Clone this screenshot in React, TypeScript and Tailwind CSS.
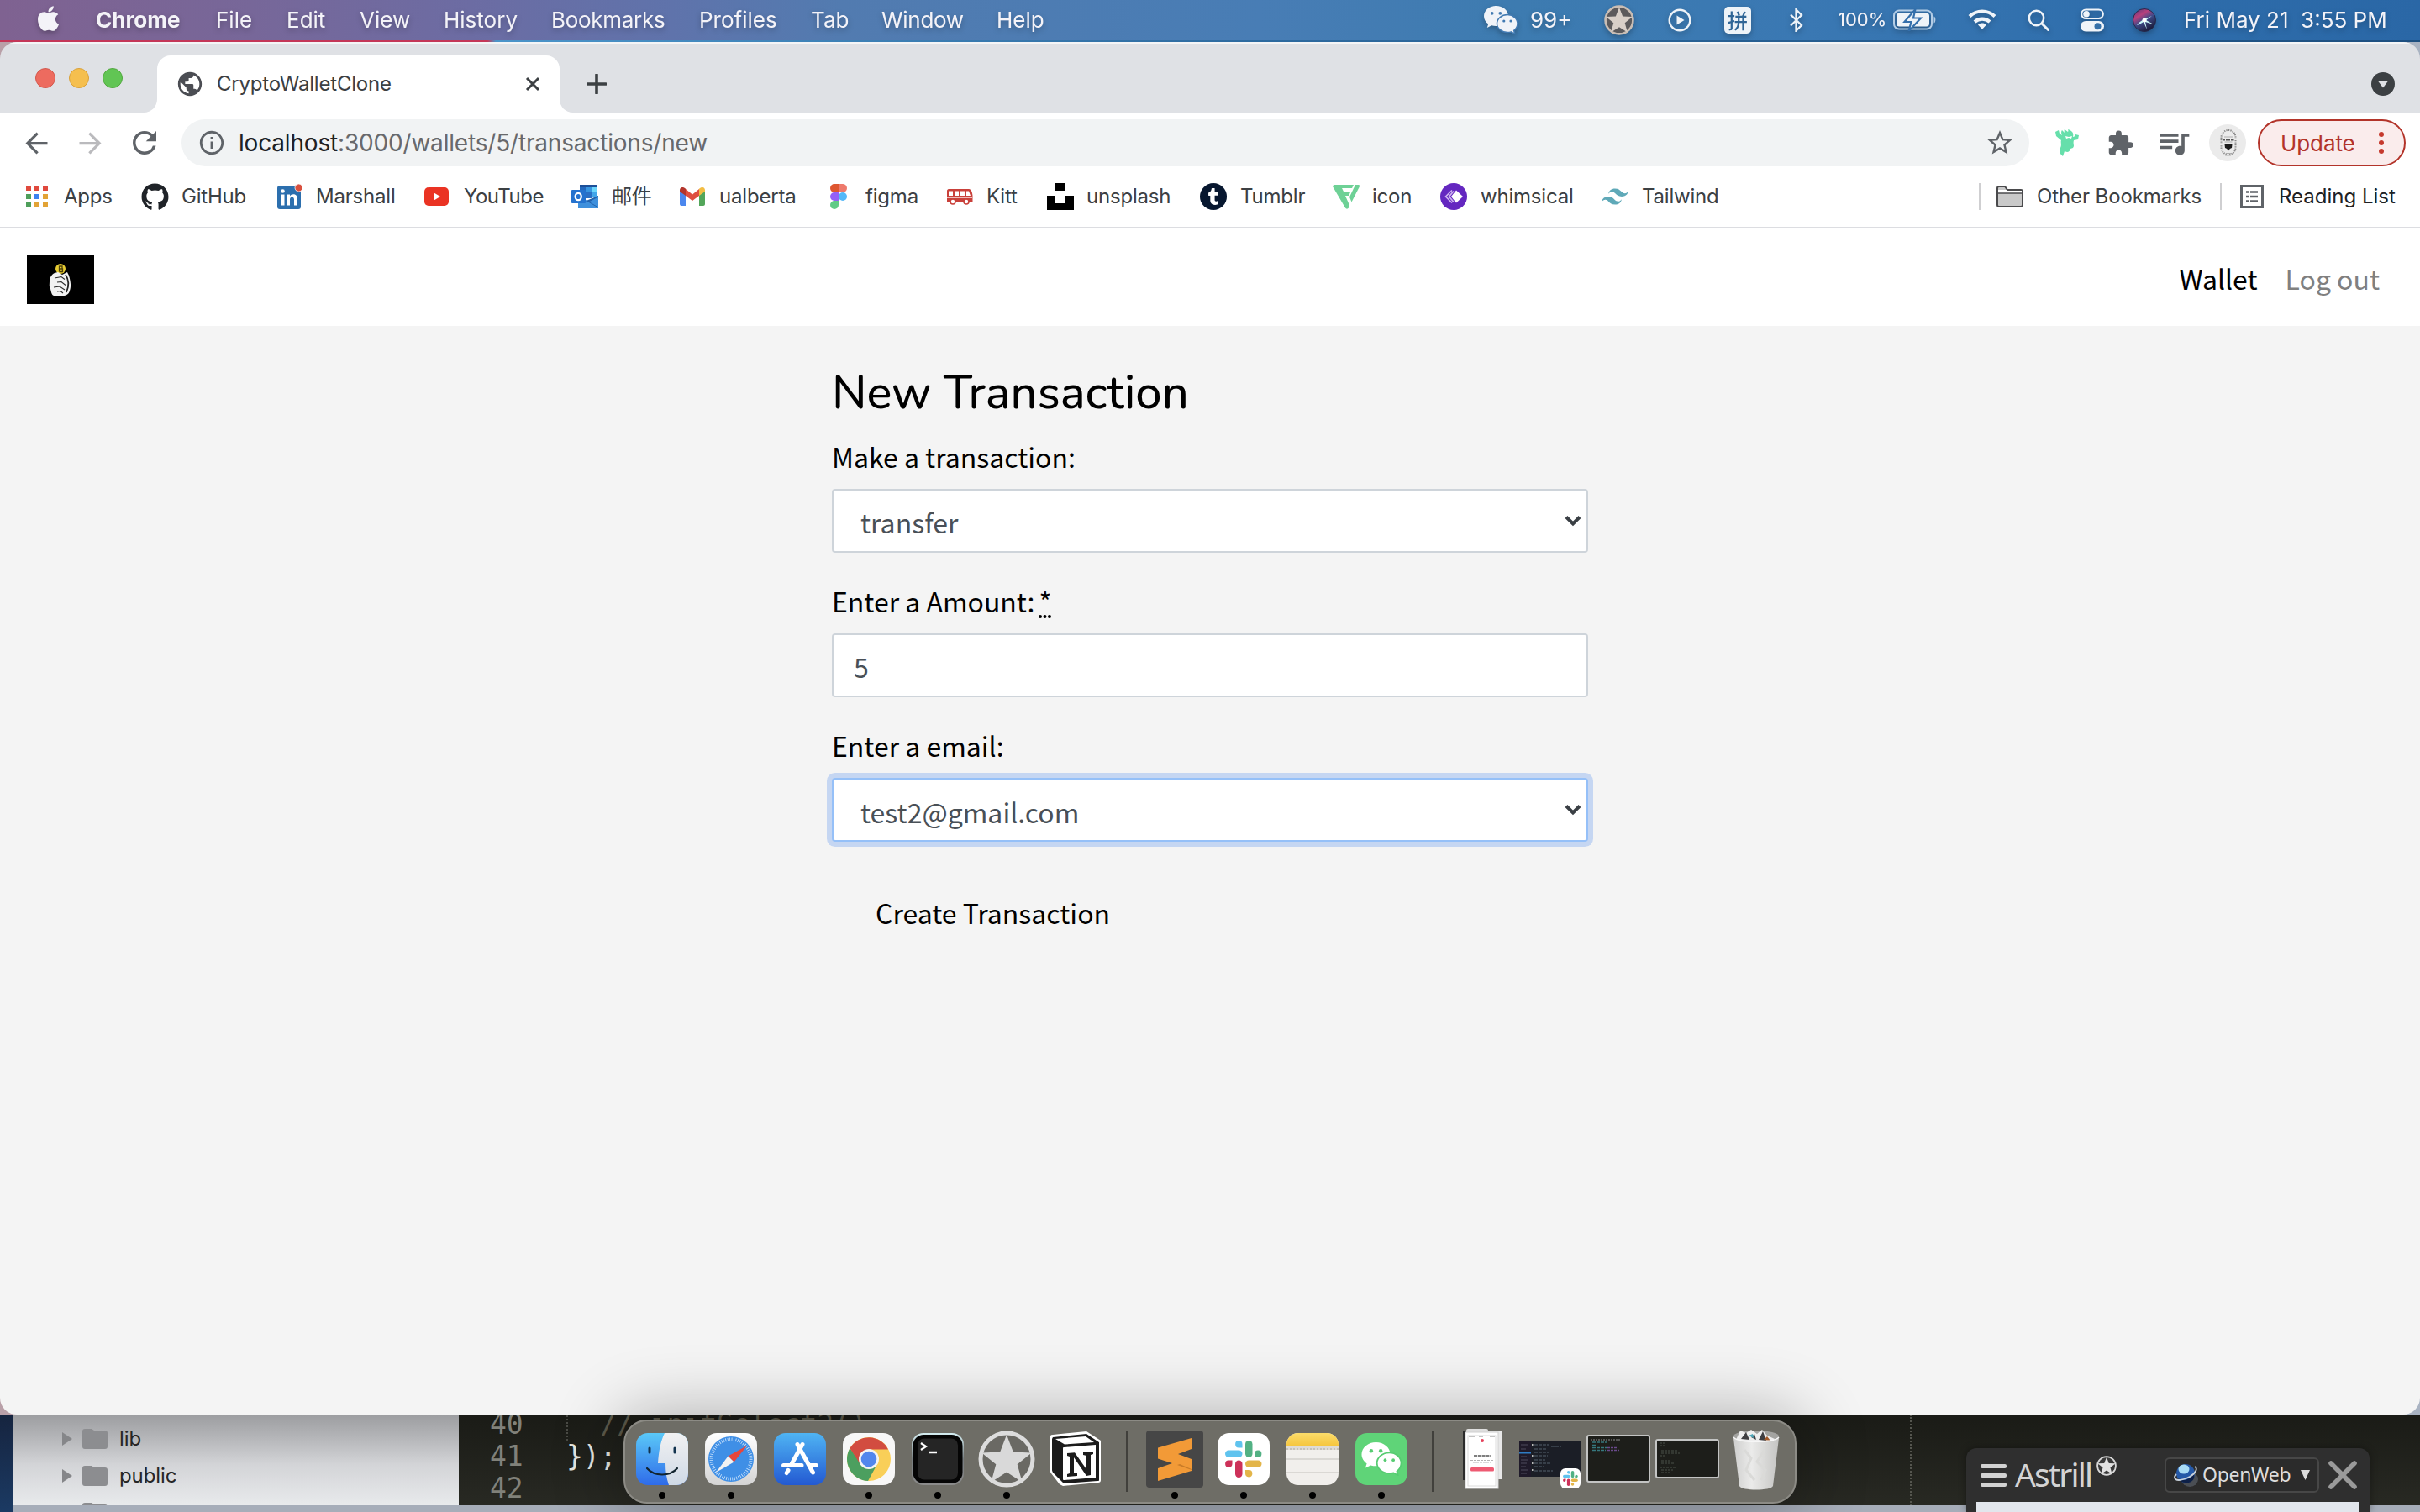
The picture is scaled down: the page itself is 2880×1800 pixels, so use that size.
import React from 'react';
import { FaApple, FaGithub, FaTumblr } from 'react-icons/fa';
import {
  MdArrowBack,
  MdArrowForward,
  MdRefresh,
  MdInfoOutline,
  MdStarBorder,
  MdExtension,
  MdQueueMusic,
  MdPublic,
} from 'react-icons/md';

const menuItems = [
  { label: 'Chrome', cls: 'w-[143px] font-bold tracking-[0px]' },
  { label: 'File', cls: 'w-[84px]' },
  { label: 'Edit', cls: 'w-[87px]' },
  { label: 'View', cls: 'w-[100px]' },
  { label: 'History', cls: 'w-[128px]' },
  { label: 'Bookmarks', cls: 'w-[176px] tracking-[-0.300px]' },
  { label: 'Profiles', cls: 'w-[133px]' },
  { label: 'Tab', cls: 'w-[84px]' },
  { label: 'Window', cls: 'w-[137px] tracking-[-0.300px]' },
  { label: 'Help', cls: 'w-[580px]' },
];

function WeChatGlyph({ className, fill, eye }: { className: string; fill: string; eye: string }) {
  return (
    <svg viewBox="0 0 40 34" className={className}>
      <path
        d="M14.5 0C6.5 0 0 5.4 0 12.2c0 3.8 2 7.100 5.200 9.300L3.800 26l5.300-2.700c1.700.5 3.500.8 5.400.8 8 0 14.500-5.300 14.500-11.900C29 5.400 22.500 0 14.500 0Z"
        fill={fill}
      />
      <path
        d="M28 10.500c-6.900 0-12.500 4.700-12.500 10.500S21.100 31.500 28 31.500c1.500 0 3-.2 4.300-.6L36.800 33.500l-1.100-4.200C38.300 27.300 40 24.300 40 21c0-5.800-5.200-10.500-12-10.500Z"
        fill={fill}
        stroke={eye}
        strokeWidth="1.500"
      />
      <circle cx="9.700" cy="8.800" r="1.900" fill={eye} />
      <circle cx="19.300" cy="8.800" r="1.900" fill={eye} />
      <circle cx="23.800" cy="18" r="1.600" fill={eye} />
      <circle cx="32" cy="18" r="1.600" fill={eye} />
    </svg>
  );
}

function StarBadge({ className, ring, hole, star }: { className: string; ring: string; hole: string; star: string }) {
  return (
    <svg viewBox="0 0 68 68" className={className}>
      <circle cx="34" cy="34" r="31" fill={hole} stroke={ring} strokeWidth="5" />
      <path d="M34 5l7.800 20.500 22 1L46.700 40.300 52.500 61.500 34 49.500 15.500 61.500l5.800-21.200L4.200 26.500l22-1Z" fill={star} />
    </svg>
  );
}

function SlackLogo({ className }: { className: string }) {
  return (
    <svg viewBox="0 0 44 44" className={className}>
      <path d="M20.500 8.500h-4.300A4.200 4.200 0 1 1 20.500 4.200Z" fill="#5fc3ee" />
      <rect x="0" y="11.500" width="20.500" height="8.500" rx="4.200" fill="#5fc3ee" />
      <rect x="24" y="0" width="8.500" height="20" rx="4.200" fill="#52b184" />
      <path d="M35 20v-4.300A4.200 4.200 0 1 1 39.300 20Z" fill="#52b184" />
      <path d="M8.500 23.500v4.300A4.200 4.200 0 1 1 4.200 23.500Z" fill="#cd3159" />
      <rect x="12" y="23.500" width="8.500" height="20.500" rx="4.200" fill="#cd3159" />
      <rect x="24" y="23.500" width="19.500" height="8.500" rx="4.200" fill="#e3b549" />
      <path d="M24 35h4.300A4.200 4.200 0 1 1 24 39.300Z" fill="#e3b549" />
    </svg>
  );
}

function MenuBar() {
  return (
    <div className="flex h-[50px] shrink-0 flex-col bg-[linear-gradient(90deg,#7f6291_0px,#776799_300px,#6c6ca3_560px,#5f73ab_800px,#527bb0_1000px,#487db5_1500px,#3d7bb0_1800px,#3a78b3_2150px,#2f6eac_2500px,#2a67a6_2880px)]">
      <div className="flex h-[48px] items-center pl-[44px] text-[26px] text-[#f4f3f8] drop-shadow-[0_3px_3px_rgba(0,0,0,0.25)]">
        <FaApple className="mb-1 -ml-[3px] mr-[40px] h-[34px] w-[33px]" />
        {menuItems.map((m) => (
          <div key={m.label} className={`mb-[2px] shrink-0 whitespace-nowrap ${m.cls}`}>
            {m.label}
          </div>
        ))}
        <div className="w-[55px] shrink-0">
          <WeChatGlyph className="h-[34px] w-[40px]" fill="#f0f3f8" eye="#417ab2" />
        </div>
        <div className="mb-[2px] w-[88px] shrink-0">99+</div>
        <div className="w-[76px] shrink-0">
          <StarBadge className="size-[36px]" ring="#c9bdb4" hole="#5c5a5c" star="#d8cfc8" />
        </div>
        <div className="w-[67px] shrink-0">
          <svg viewBox="0 0 28 28" className="size-[28px]">
            <circle cx="14" cy="14" r="12.300" fill="none" stroke="#eef3f8" strokeWidth="2.400" />
            <path d="M10.500 8.500v11l9-5.500Z" fill="#eef3f8" />
          </svg>
        </div>
        <div className="w-[76px] shrink-0">
          <div className="flex h-[32px] w-[32px] items-center justify-center rounded-[5px] bg-[#eef3f8] font-['Noto_Sans_CJK_SC',sans-serif] text-[24px] font-medium leading-none text-[#2f6596]">
            拼
          </div>
        </div>
        <div className="w-[59px] shrink-0">
          <svg viewBox="0 0 20 28" className="h-[28px] w-[20px]">
            <path d="M3 7.500l13 12.500-6.500 6.500v-25L16 8 3 20.500" fill="none" stroke="#eef3f8" strokeWidth="2.300" />
          </svg>
        </div>
        <div className="mb-[2px] w-[66px] shrink-0 text-[22px]">100%</div>
        <div className="w-[89px] shrink-0">
          <svg viewBox="0 0 52 26" className="h-[26px] w-[52px]">
            <rect x="1" y="1.500" width="45" height="22" rx="6" fill="none" stroke="#b4cde6" strokeWidth="2" />
            <rect x="4" y="4.500" width="39" height="16" rx="3.500" fill="#eef3f8" />
            <path d="M48.500 8.500c2.500 1 2.500 7 0 8Z" fill="#b4cde6" />
            <path d="M26.500 0L13.500 15h8l-3 11L33 10.500h-9Z" fill="#eef3f8" stroke="#346fab" strokeWidth="2.200" />
          </svg>
        </div>
        <div className="w-[71px] shrink-0">
          <svg viewBox="0 0 34 24" className="mb-[2px] h-[24px] w-[34px]" fill="none" stroke="#f0f4f9" strokeWidth="4.200">
            <path d="M2 8.500C10.500.5 23.500.5 32 8.500" />
            <path d="M8 15c5-4.500 13-4.500 18 0" />
            <path d="M12 18.500c3-2.600 7-2.600 10 0L17 23.800Z" fill="#f0f4f9" stroke="none" />
          </svg>
        </div>
        <div className="w-[63px] shrink-0">
          <svg viewBox="0 0 26 26" className="size-[26px]" fill="none" stroke="#f0f4f9" strokeWidth="2.500">
            <circle cx="10.500" cy="10.500" r="8.700" />
            <path d="M17 17l7.500 7.500" strokeWidth="3" strokeLinecap="round" />
          </svg>
        </div>
        <div className="w-[62px] shrink-0">
          <svg viewBox="0 0 28 28" className="size-[28px]">
            <rect x="1.200" y="1.500" width="25.600" height="10.500" rx="5.200" fill="none" stroke="#f0f4f9" strokeWidth="2.200" />
            <circle cx="7" cy="6.800" r="3.800" fill="#f0f4f9" />
            <rect x="0" y="15" width="28" height="12.500" rx="6.200" fill="#f0f4f9" />
            <circle cx="20.500" cy="21.200" r="4" fill="#3671a9" />
          </svg>
        </div>
        <div className="w-[61px] shrink-0">
          <svg viewBox="0 0 28 28" className="size-[28px]">
            <defs>
              <linearGradient id="siri" x1="0" y1="0" x2="0.600" y2="1">
                <stop offset="0" stopColor="#4b3a7c" />
                <stop offset="0.350" stopColor="#b8407c" />
                <stop offset="0.600" stopColor="#3f4a88" />
                <stop offset="1" stopColor="#1b1c3a" />
              </linearGradient>
            </defs>
            <circle cx="14" cy="14" r="13.500" fill="url(#siri)" stroke="#26284a" />
            <path d="M5 20c3-4 6-6 9-7l9-4-7 5 9 5-10-3 2 9-4-9-5 3Z" fill="#c8f6f6" />
            <circle cx="14" cy="14" r="2.500" fill="#fff" />
          </svg>
        </div>
        <div className="mb-[2px] whitespace-pre">Fri May 21  3:55 PM</div>
      </div>
      <div className="h-[2px] bg-[linear-gradient(90deg,#c43758_0px,#c43758_580px,#4b94c9_590px,#2d6a9f_1500px,#1d4f80_2880px)]" />
    </div>
  );
}

function TabStrip() {
  return (
    <div className="flex h-[84px] items-end border-t-2 border-[#f4f5f6] bg-[#dfe1e5] pl-[42px]">
      <div className="mb-[29px] flex w-[129px] shrink-0 gap-[16px]">
        <div className="size-[24px] rounded-full border border-[#d2574c] bg-[#ed6b5f]" />
        <div className="size-[24px] rounded-full border border-[#d9a13b] bg-[#f5bf4f]" />
        <div className="size-[24px] rounded-full border border-[#52a73e] bg-[#61c554]" />
      </div>
      <svg viewBox="0 0 16 16" className="size-[16px] shrink-0"><path d="M16 0v16H0C9 16 16 9 16 0Z" fill="#fff" /></svg>
      <div className="flex h-[68px] w-[479px] shrink-0 items-center rounded-t-[16px] bg-white">
        <MdPublic className="ml-[22px] size-[34px] text-[#4b4d53]" />
        <div className="ml-[15px] w-[367px] text-[24px] tracking-[-0.200px] text-[#3c4043]">CryptoWalletClone</div>
        <svg viewBox="0 0 18 18" className="size-[18px]"><path d="M2 2l14 14M16 2L2 16" stroke="#3c4043" strokeWidth="3" /></svg>
      </div>
      <svg viewBox="0 0 16 16" className="size-[16px] shrink-0"><path d="M0 0v16h16C7 16 0 9 0 0Z" fill="#fff" /></svg>
      <svg viewBox="0 0 24 24" className="mb-[22px] ml-[16px] size-[24px]"><path d="M12 1v22M1 12h22" stroke="#3c4043" strokeWidth="3.600" strokeLinecap="round" /></svg>
      <div className="grow" />
      <svg viewBox="0 0 28 28" className="mb-[20px] mr-[30px] size-[28px]">
        <circle cx="14" cy="14" r="14" fill="#3c4043" />
        <path d="M8 10.500h12L14 18.500Z" fill="#dfe1e5" />
      </svg>
    </div>
  );
}

function Toolbar() {
  return (
    <div className="flex h-[72px] items-center bg-white pl-[24px]">
      <MdArrowBack className="size-[39px] text-[#5f6368]" />
      <MdArrowForward className="ml-[25px] size-[39px] text-[#bababd]" />
      <MdRefresh className="ml-[24px] size-[42px] text-[#5f6368]" />
      <div className="ml-[23px] flex h-[56px] w-[2199px] shrink-0 items-center rounded-full bg-[#f1f3f4]">
        <MdInfoOutline className="ml-[19px] size-[34px] text-[#5f6368]" />
        <div className="ml-[15px] grow text-[28px] tracking-[-0.180px] text-[#68696c]">
          <span className="text-[#202124]">localhost</span>:3000/wallets/5/transactions/new
        </div>
        <MdStarBorder className="mr-[17px] size-[36px] text-[#5f6368]" />
      </div>
      <svg viewBox="0 0 28 32" className="ml-[31px] h-[32px] w-[28px] shrink-0" fill="#66dfab">
        <path d="M8 7C6 3 8 1 8 1l3 3c-1-3 0-4 0-4l4 3c1-1 0-3 0-3 6 2 7 5 6 9l3-1V6l4 1-1 5-5 1c-1 3 0 5 0 7l-1 2-3 1c0 2-2 4-4 4l-3-1-2 6C4 28 5 25 6 22c2-3 0-7 1-9L1 8 0 3l4-2 1 4Z" />
        <path d="M12 8l4 1 4-1-1 3-3-1-3 1Z" fill="#fff" />
      </svg>
      <MdExtension className="ml-[33px] size-[33px] shrink-0 text-[#5f6368]" />
      <MdQueueMusic className="ml-[25px] size-[44px] shrink-0 text-[#5f6368]" />
      <svg viewBox="0 0 44 44" className="ml-[20px] size-[44px] shrink-0">
        <circle cx="22" cy="22" r="22" fill="#ebebeb" />
        <rect x="14.500" y="7" width="17" height="29" rx="8.500" fill="none" stroke="#8a8a8a" strokeWidth="2" strokeDasharray="1.300 1.100" />
        <path d="M20 11.500h6M18 15h10M18.500 21h9M20 34.500h6M19 37h7" stroke="#a8a8a8" strokeWidth="0.900" />
        <path d="M17 18.500h12.500" stroke="#555" strokeWidth="2.200" strokeDasharray="2 1" />
        <path d="M18.500 24c2-2 3 0 4.500-1 1.500 1 2.500-1 4.500 1l-.5 4-2.200 1-1.800 2.500-1.800-2.500-2.200-1Z" fill="#1c1c1c" />
      </svg>
      <div className="ml-[14px] flex h-[56px] w-[176px] shrink-0 items-center rounded-full border-2 border-[#b3342a] bg-[#faecec] pl-[25px]">
        <div className="w-[117px] text-[26px] tracking-[-0.100px] text-[#b3342a]">Update</div>
        <div className="flex flex-col gap-[4px]">
          <div className="size-[6px] rounded-full bg-[#c5392d]" />
          <div className="size-[6px] rounded-full bg-[#c5392d]" />
          <div className="size-[6px] rounded-full bg-[#c5392d]" />
        </div>
      </div>
    </div>
  );
}

const appColors = ['bg-[#e0493d]', 'bg-[#e0493d]', 'bg-[#e0493d]', 'bg-[#4f9f5b]', 'bg-[#3b82f0]', 'bg-[#e2a336]', 'bg-[#4f9f5b]', 'bg-[#e2a336]', 'bg-[#e2a336]'];

const bookmarks: { label: string; w: string; slot: string; icon: React.ReactNode }[] = [
  {
    label: 'Apps', w: 'w-[137px]', slot: 'w-[45px]',
    icon: (
      <div className="grid w-[26px] grid-cols-3 gap-[4px]">
        {appColors.map((c, i) => <div key={i} className={`size-[6px] ${c}`} />)}
      </div>
    ),
  },
  { label: 'GitHub', w: 'w-[162px]', slot: 'w-[48px]', icon: <FaGithub className="size-[33px] text-[#1f2328]" /> },
  {
    label: 'Marshall', w: 'w-[175px]', slot: 'w-[46px]',
    icon: (
      <svg viewBox="0 0 30 30" className="size-[30px]">
        <rect x="0" y="2" width="28" height="28" rx="3" fill="#2c6fae" />
        <path d="M4.500 12.500h4v13h-4ZM11 12.500h4v2c2-3.500 9-3.200 9 3v8h-4v-7c0-4-5-4-5 0v7h-4Z" fill="#fff" />
        <circle cx="6.500" cy="8.500" r="2.300" fill="#fff" />
        <circle cx="25.500" cy="4.500" r="4.500" fill="#d9503f" stroke="#fff" strokeWidth="0.800" />
      </svg>
    ),
  },
  {
    label: 'YouTube', w: 'w-[175px] tracking-[-0.500px]', slot: 'w-[47px]',
    icon: (
      <svg viewBox="0 0 29 22" className="h-[22px] w-[29px]"><rect width="29" height="22" rx="5" fill="#ea3323" /><path d="M11.500 6.500v9l7.500-4.500Z" fill="#fff" /></svg>
    ),
  },
  {
    label: '邮件', w: 'w-[129px]', slot: 'w-[48px]',
    icon: (
      <svg viewBox="0 0 32 28" className="h-[28px] w-[32px]">
        <rect x="10" y="0" width="20" height="4" fill="#1c4f98" />
        <rect x="10" y="3" width="7" height="12" fill="#2368bd" />
        <rect x="17" y="3" width="7" height="7" fill="#3795e0" />
        <rect x="24" y="3" width="6" height="7" fill="#6cd5fb" />
        <rect x="17" y="9" width="7" height="7" fill="#2a6fc4" />
        <rect x="24" y="9" width="6" height="5" fill="#41a5ea" />
        <path d="M8 13l12 6.500L32 13v15H8Z" fill="#3f90dc" />
        <path d="M32 13v1.500L20 21l-3-1.700Z" fill="#2363ad" />
        <path d="M20 20l12 7" stroke="#2363ad" strokeWidth="1" />
        <rect x="0" y="6" width="17" height="16" rx="1" fill="#2472ce" />
        <ellipse cx="8.200" cy="14" rx="3.600" ry="4.200" fill="none" stroke="#fff" strokeWidth="2.200" />
      </svg>
    ),
  },
  {
    label: 'ualberta', w: 'w-[179px]', slot: 'w-[47px]',
    icon: (
      <svg viewBox="0 0 30 22" className="h-[22px] w-[30px]">
        <path d="M0 4v16c0 1 1 2 2 2h5V9Z" fill="#4b87ee" />
        <path d="M30 4v16c0 1-1 2-2 2h-5V9Z" fill="#53a65a" />
        <path d="M7 2v8l8 6 8-6V2l-8 6.500Z" fill="#de4f40" />
        <path d="M0 3.500C0 0 3.500-1 6 1l1 .8V10L0 5Z" fill="#b3352c" />
        <path d="M30 3.500C30 0 26.500-1 24 1l-1 .8V10l7-5Z" fill="#f3bd43" />
      </svg>
    ),
  },
  {
    label: 'figma', w: 'w-[138px]', slot: 'w-[42px]',
    icon: (
      <svg viewBox="0 0 20 30" className="h-[30px] w-[20px]">
        <path d="M5 0h5v10H5A5 5 0 0 1 5 0Z" fill="#de5630" />
        <path d="M10 0h5a5 5 0 0 1 0 10h-5Z" fill="#ee7a6c" />
        <path d="M5 10h5v10H5a5 5 0 0 1 0-10Z" fill="#9560f6" />
        <circle cx="15" cy="15" r="5" fill="#54b8f8" />
        <path d="M5 20h5v5a5 5 0 1 1-5-5Z" fill="#61cb87" />
      </svg>
    ),
  },
  {
    label: 'Kitt', w: 'w-[120px]', slot: 'w-[48px]',
    icon: (
      <svg viewBox="0 0 32 20" className="h-[20px] w-[32px]">
        <path d="M3 1h24c3 0 4 4 4.500 8v7H1V3c0-1 1-2 2-2Z" fill="#c9403a" />
        <path d="M3 3.500h5V9H3ZM10 3.500h5V9h-5ZM17 3.500h5V9h-5ZM24 3.500h3L29 9h-5Z" fill="#fff" />
        <path d="M1 11.500h30" stroke="#eebbb8" strokeWidth="1" />
        <circle cx="8" cy="16" r="3" fill="#fff" stroke="#c9403a" strokeWidth="1.600" />
        <circle cx="24" cy="16" r="3" fill="#fff" stroke="#c9403a" strokeWidth="1.600" />
      </svg>
    ),
  },
  {
    label: 'unsplash', w: 'w-[182px]', slot: 'w-[47px]',
    icon: <svg viewBox="0 0 32 32" className="size-[32px]"><path d="M10 0h12v9H10ZM0 15h10v9h12v-9h10v17H0Z" fill="#000" /></svg>,
  },
  {
    label: 'Tumblr', w: 'w-[158px]', slot: 'w-[48px]',
    icon: <div className="flex size-[32px] items-center justify-center rounded-full bg-[#07172f]"><FaTumblr className="size-[20px] text-white" /></div>,
  },
  {
    label: 'icon', w: 'w-[128px]', slot: 'w-[47px]',
    icon: (
      <svg viewBox="0 0 32 30" className="h-[30px] w-[32px]" fill="#6ed196">
        <path d="M2 1h23l-2 4H11l2.500 5H21l-2 4h-4l4 9v5.500c-1 1.500-3 1.500-4 0L0 3C0 2 1 1 2 1Z" />
        <path d="M27 1h4c1 0 1 1 1 2L22.500 21.500 20 15.500Z" />
      </svg>
    ),
  },
  {
    label: 'whimsical', w: 'w-[192px]', slot: 'w-[48px]',
    icon: (
      <svg viewBox="0 0 32 32" className="size-[32px]">
        <circle cx="16" cy="16" r="16" fill="#6427c0" />
        <path d="M19 8.500l8 7.500-8 7.500-6-7.500Z" fill="#fff" />
        <path d="M14 8.500L6.500 16l7.500 7.500M16 9.500L10.500 16l5.500 6.500" fill="none" stroke="#cdb2f0" strokeWidth="1.700" />
      </svg>
    ),
  },
  {
    label: 'Tailwind', w: 'w-[449px]', slot: 'w-[48px]',
    icon: (
      <svg viewBox="0 0 24 24" className="size-[32px]" fill="#5fa9b8">
        <path d="M12 4.800c-3.200 0-5.200 1.600-6 4.800 1.200-1.600 2.600-2.200 4.200-1.800.913.228 1.565.89 2.288 1.624C13.666 10.618 15.027 12 18 12c3.200 0 5.200-1.600 6-4.800-1.200 1.600-2.600 2.200-4.200 1.800-.913-.228-1.565-.89-2.288-1.624C16.337 6.182 14.976 4.800 12 4.800zM6 12c-3.200 0-5.200 1.600-6 4.800 1.200-1.600 2.600-2.200 4.200-1.800.913.228 1.565.89 2.288 1.624C7.666 17.818 9.027 19.200 12 19.200c3.200 0 5.200-1.600 6-4.800-1.200 1.600-2.600 2.200-4.200 1.800-.913-.228-1.565-.89-2.288-1.624C10.337 13.382 8.976 12 6 12z" />
      </svg>
    ),
  },
];

function BookmarksBar() {
  return (
    <div className="flex h-[66px] items-center border-b-2 border-[#dcdde1] bg-white pb-[8px] pl-[31px] font-[Inter,'Noto_Sans_CJK_SC',sans-serif] text-[24px] tracking-[-0.200px] text-[#3c4043]">
      {bookmarks.map((b) => (
        <div key={b.label} className={`flex h-[32px] shrink-0 items-center ${b.w}`}>
          <div className={`shrink-0 ${b.slot}`}>{b.icon}</div>
          <div className="whitespace-nowrap leading-none">{b.label}</div>
        </div>
      ))}
      <div className="h-[32px] w-[2px] bg-[#cfcfd1]" />
      <svg viewBox="0 0 32 26" className="ml-[19px] h-[26px] w-[32px]">
        <path d="M1 3c0-1 1-2 2-2h7l3 4h16c1 0 2 1 2 2v16c0 1-1 2-2 2H3c-1 0-2-1-2-2Z" fill="#c9c9c9" stroke="#4a4a4c" strokeWidth="2" />
        <path d="M2 5h10l1 1h17v3H2Z" fill="#fff" />
        <path d="M1 9h30" stroke="#4a4a4c" strokeWidth="1.600" />
      </svg>
      <div className="ml-[16px] w-[218px] whitespace-nowrap tracking-[-0.100px]">Other Bookmarks</div>
      <div className="h-[32px] w-[2px] bg-[#cfcfd1]" />
      <svg viewBox="0 0 28 28" className="ml-[22px] size-[28px]">
        <rect x="1.500" y="1.500" width="25" height="25" fill="none" stroke="#5f6368" strokeWidth="3" />
        <path d="M7 8.500h3M12 8.500h9M7 14h3M12 14h9M7 19.500h3M12 19.500h9" stroke="#5f6368" strokeWidth="2.400" />
      </svg>
      <div className="ml-[18px] whitespace-nowrap tracking-[0px] text-[#202124]">Reading List</div>
    </div>
  );
}

function Chevron() {
  return (
    <svg viewBox="0 0 20 14" className="mr-[6px] h-[14px] w-[20px]">
      <path d="M2 2.500l8 8 8-8" fill="none" stroke="#3a3f44" strokeWidth="4" />
    </svg>
  );
}

function Page() {
  return (
    <div className="flex grow flex-col bg-[#f4f4f4] font-['Noto_Sans_CJK_SC',sans-serif]">
      <div className="flex h-[116px] items-center justify-between bg-white pl-[32px] pr-[48px]">
        <svg viewBox="0 0 80 58" className="mt-[6px] h-[58px] w-[80px]">
          <rect width="80" height="58" fill="#000" />
          <circle cx="40" cy="16" r="6" fill="#e6cb33" />
          <path d="M38.500 12.500v7M38.500 13h3.500v3h-3.500M38.500 16h4v3.500h-4" stroke="#4c400a" strokeWidth="1.300" fill="none" />
          <path d="M33 21l4-1 5 3 6-3 2 4c2 7 3 13 1 18-1 4-4 6-8 6H32c-3-1-3-5-4-8-2-3-1-6-1-9 0-4 2-8 6-10Z" fill="#f2f2f2" />
          <path d="M33 27l8-1.500 4 3M36 32l5-.5 5 4M32 38l7-1 6 4M36 43l4-.5 3 2.500" stroke="#2a2a2a" strokeWidth="1.100" fill="none" />
          <path d="M46 23c4 6 4 14 1 21" stroke="#222" strokeWidth="1.800" fill="none" />
        </svg>
        <div className="mt-[2px] flex gap-[33px] text-[32px]">
          <span className="text-black">Wallet</span>
          <span className="text-[#808080]">Log out</span>
        </div>
      </div>
      <div className="mx-auto flex w-[900px] flex-col text-[32px] leading-[48px] text-black">
        <h1 className="mt-[44px] h-[76px] font-[Nunito,'Noto_Sans',sans-serif] text-[56px] font-medium leading-[72px] tracking-[0px]">New Transaction</h1>
        <div className="mt-[11px] h-[63px]">Make a transaction:</div>
        <div className="flex h-[76px] items-center justify-between rounded-[4px] border-2 border-[#ced4da] bg-white pl-[32px] text-[#495057]">
          <span className="pt-[2px]">transfer</span>
          <Chevron />
        </div>
        <div className="mt-[33px] h-[63px]">
          Enter a Amount:{' '}
          <span className="-ml-[2px] underline decoration-dotted decoration-[4px] underline-offset-[3px]">*</span>
        </div>
        <div className="flex h-[76px] items-center rounded-[4px] border-2 border-[#ced4da] bg-white pl-[24px] text-[#495057]">
          <span className="pt-[2px]">5</span>
        </div>
        <div className="mt-[33px] h-[63px]">Enter a email:</div>
        <div className="flex h-[76px] items-center justify-between rounded-[4px] border-2 border-[#95c0f8] bg-white pl-[32px] text-[#495057] shadow-[0_0_0_6px_#c5d6f2]">
          <span className="pt-[4px]">test2@gmail.com</span>
          <Chevron />
        </div>
        <div className="mt-[60px] pl-[52px]">Create Transaction</div>
      </div>
    </div>
  );
}

function TreeRow({ label }: { label: string }) {
  return (
    <div className="flex h-[44px] items-center pl-[58px] text-[24px] text-[#262626]">
      <svg viewBox="0 0 12 16" className="h-[16px] w-[12px]"><path d="M0 0l12 8L0 16Z" fill="#858689" /></svg>
      <svg viewBox="0 0 30 24" className="ml-[12px] h-[24px] w-[30px]"><path d="M0 3c0-2 1-3 3-3h8l3 2h13c2 0 3 1 3 3v16c0 2-1 3-3 3H3c-2 0-3-1-3-3Z" fill="#8c8d90" /></svg>
      <span className="ml-[14px] tracking-[-0.100px]">{label}</span>
    </div>
  );
}

function DesktopBehind() {
  return (
    <div className="flex h-[116px] shrink-0 bg-[linear-gradient(180deg,#16243f,#1b3a63)]">
      <div className="w-[16px] shrink-0" />
      <div className="flex h-[116px] grow flex-col bg-[#a6adb9]">
        <div className="flex h-[108px]">
          <div className="h-[108px] w-[530px] shrink-0 overflow-hidden bg-[linear-gradient(180deg,#9c9da0_0%,#b4b5b8_25%,#d3d4d7_55%,#e8eaec_100%)] pt-[7px]">
            <TreeRow label="lib" />
            <TreeRow label="public" />
            <TreeRow label="" />
          </div>
          <div className="h-[108px] grow overflow-hidden bg-[linear-gradient(180deg,#1a1b16,#282923)] font-['DejaVu_Sans_Mono',monospace] text-[33px] leading-[38px]">
            <div className="-mt-[7px] flex">
              <div className="w-[128px] shrink-0 pl-[37px] text-[#80817a]">
                <div>40</div>
                <div>41</div>
                <div>42</div>
              </div>
              <div className="whitespace-pre text-[#e6e6e0]">
                <div className="h-[38px] w-[1599px] border-l-2 border-dotted border-[#4a4b45] pl-[38px] text-[#5c594a]">{'// initSelect2();'}</div>
                <div>{'});'}</div>
              </div>
              <div className="mt-[7px] h-[108px] w-[2px] border-l-2 border-dotted border-[#55564f]" />
            </div>
          </div>
        </div>
      </div>
    </div>
  );
}

function FinderIcon() {
  return (
    <svg viewBox="0 0 62 62" className="size-[62px]">
      <defs>
        <linearGradient id="fb" x1="0" y1="0" x2="0" y2="1"><stop offset="0" stopColor="#5ac8f8" /><stop offset="1" stopColor="#2f6be9" /></linearGradient>
        <linearGradient id="fw" x1="0" y1="0" x2="0" y2="1"><stop offset="0" stopColor="#f1f1f2" /><stop offset="1" stopColor="#cfd9e6" /></linearGradient>
        <clipPath id="fc"><rect width="62" height="62" rx="14" /></clipPath>
      </defs>
      <g clipPath="url(#fc)">
        <rect width="62" height="62" fill="url(#fb)" />
        <path d="M34 0c-5 10-7 22-8 36h9c0 9 1 18 4 26h23V0Z" fill="url(#fw)" />
      </g>
      <path d="M16 18v5M46 18v5" stroke="#12334f" strokeWidth="3" strokeLinecap="round" />
      <path d="M13 42c9 10 27 10 36 0" stroke="#12242f" strokeWidth="2.200" fill="none" strokeLinecap="round" />
    </svg>
  );
}

function SafariIcon() {
  return (
    <svg viewBox="0 0 62 62" className="size-[62px]">
      <defs>
        <linearGradient id="sw" x1="0" y1="0" x2="0" y2="1"><stop offset="0" stopColor="#fff" /><stop offset="1" stopColor="#d4d4d4" /></linearGradient>
      </defs>
      <rect width="62" height="62" rx="14" fill="url(#sw)" />
      <circle cx="31" cy="31" r="27" fill="#3f8fe6" />
      <circle cx="31" cy="31" r="23.500" fill="none" stroke="#cfe5fb" strokeWidth="4" strokeDasharray="0.800 1.660" />
      <path d="M50 15L27.500 27.500 34.500 34.500Z" fill="#e8453c" />
      <path d="M13 47l14.500-19.500 7 7Z" fill="#f2f2f2" />
    </svg>
  );
}

function AppStoreIcon() {
  return (
    <svg viewBox="0 0 62 62" className="size-[62px]">
      <defs>
        <linearGradient id="as" x1="0" y1="0" x2="0" y2="1"><stop offset="0" stopColor="#4fb4f3" /><stop offset="1" stopColor="#2359d2" /></linearGradient>
      </defs>
      <rect width="62" height="62" rx="14" fill="url(#as)" />
      <g stroke="#fff" strokeWidth="5" strokeLinecap="round" fill="none">
        <path d="M34 13.500L21.500 36M28 13.500L46.500 47M11.500 38.500H33M44 38.500h6.500M17 44.500l-1.800 3" />
      </g>
    </svg>
  );
}

function ChromeIcon() {
  return (
    <svg viewBox="0 0 62 62" className="size-[62px]">
      <rect width="62" height="62" rx="14" fill="#f7f7f7" />
      <circle cx="31" cy="31" r="26" fill="#f9cf58" />
      <path d="M8.500 18A26 26 0 0 0 30 57l11-20-20-1Z" fill="#4c9f5f" />
      <path d="M8.500 18a26 26 0 0 1 45.500 1.500H31L20 36Z" fill="#d24c40" />
      <circle cx="31" cy="31" r="12" fill="#f4f4f4" />
      <circle cx="31" cy="31" r="9.300" fill="#5287ed" />
    </svg>
  );
}

function TerminalIcon() {
  return (
    <svg viewBox="0 0 62 62" className="size-[62px]">
      <defs>
        <linearGradient id="tm" x1="0" y1="0" x2="0" y2="1"><stop offset="0" stopColor="#d5eef2" /><stop offset="0.500" stopColor="#777d80" /><stop offset="1" stopColor="#8b8b8b" /></linearGradient>
      </defs>
      <rect width="62" height="62" rx="14" fill="url(#tm)" />
      <rect x="1.500" y="2" width="59" height="58" rx="13" fill="#050505" />
      <rect x="7" y="6.500" width="48" height="49" rx="8" fill="#252525" />
      <path d="M11 12l6 4-6 4M21 23h9" stroke="#fff" strokeWidth="2.300" fill="none" />
    </svg>
  );
}

function NotionIcon() {
  return (
    <svg viewBox="0 0 62 66" className="h-[66px] w-[62px]">
      <path d="M4 4L44 0l17 11v47c0 2-1 3-3 3l-42 4-4-2L2 50c-1-2-2-3-2-5V8c0-2 1-4 4-4Z" fill="#fff" />
      <path d="M4 7l40-4 15 10v44c0 2 0 2-2 2l-40 3L4 49c-1-2-1-2-1-4V9Z" fill="#1b1b1b" />
      <path d="M7 9l36-3 10 7-35 2.500Z" fill="#fff" />
      <path d="M16 21c0-2 0-2 2-2l37-3v39l-37 3c-2 0-2 0-2-2Z" fill="#fff" />
      <path d="M21 26l9-.800 14 20V29l-4-1v-3l12-1v3l-3 1v24l-5 1-15-22v18l4 1v3l-12 1v-3l3-1V30l-3-1Z" fill="#1b1b1b" />
    </svg>
  );
}

function SublimeIcon() {
  return (
    <svg viewBox="0 0 68 68" className="size-[68px]">
      <rect width="68" height="68" rx="4" fill="#464646" />
      <path d="M14 20.500L54 9v13L38 28l16 6v14L14 60V45l17-6-17-5.500Z" fill="#f29a37" />
      <path d="M37 41l17 6v-1L40 40Z" fill="#c97c28" />
    </svg>
  );
}

function SlackIcon() {
  return (
    <div className="flex size-[62px] items-center justify-center rounded-[14px] bg-white">
      <SlackLogo className="size-[44px]" />
    </div>
  );
}

function NotesIcon() {
  return (
    <div className="flex size-[62px] flex-col overflow-hidden rounded-[14px] bg-[#f1efec]">
      <div className="h-[16px] bg-[linear-gradient(180deg,#fbdc6a,#f5c53c)]" />
      <div className="h-[4px] border-b-2 border-dotted border-[#c4c1ba] bg-[#dedbd5]" />
      <div className="h-[12px] border-b-2 border-[#dad8d4]" />
      <div className="h-[16px] border-b-2 border-[#dad8d4]" />
    </div>
  );
}

function WeChatIcon() {
  return (
    <div className="flex size-[62px] items-center justify-center rounded-[14px] bg-[#5fd478]">
      <WeChatGlyph className="h-[40px] w-[48px]" fill="#fff" eye="#57cc72" />
    </div>
  );
}

function PagesStack() {
  return (
    <svg viewBox="0 0 48 74" className="h-[74px] w-[48px]">
      <rect x="1" y="4" width="8" height="58" fill="#2b2b2b" />
      <rect x="8" y="3" width="39" height="58" fill="#e8e8e8" />
      <rect x="5" y="1" width="26" height="8" rx="2" fill="#dedede" />
      <rect x="4" y="5" width="39" height="67" fill="#fff" stroke="#cfcfcf" />
      <rect x="7" y="9" width="33" height="60" fill="#fff" stroke="#dcdcdc" />
      <path d="M8 10h7M20 10h5M33 10h6" stroke="#888" strokeWidth="1.200" />
      <circle cx="24" cy="15" r="2" fill="#e5405a" />
      <path d="M14 33h20" stroke="#555" strokeWidth="1.600" strokeDasharray="4 0.800" />
      <path d="M10 38.500h28M13 41h22" stroke="#b5b5b5" strokeWidth="1" strokeDasharray="3 1" />
      <rect x="10" y="47" width="28" height="4.500" rx="1.500" fill="#ee5a72" />
    </svg>
  );
}

function SlackWindow() {
  return (
    <div className="relative h-[42px] w-[73px]">
      <svg viewBox="0 0 73 42" className="h-[42px] w-[73px]">
        <rect width="73" height="42" fill="#1b1e26" />
        <rect width="14" height="42" fill="#1f1a2a" />
        <rect x="0" y="12" width="14" height="2.500" fill="#2f7cc4" />
        <path d="M2 4h8M2 9h6M2 18h7M2 22h8M2 26h7M2 30h6M2 34h8M2 38h7" stroke="#4f4a5c" strokeWidth="1" />
        <path d="M18 4h18M18 9h14M18 13h18M18 17h16M18 22h13M18 26h20M18 30h12M18 35h22M38 6h12" stroke="#55606c" strokeWidth="1" strokeDasharray="4 1" />
        <path d="M15 4h1.500M15 17h1.500M15 26h1.500M15 34h1.500" stroke="#bbb" strokeWidth="1.800" />
      </svg>
      <div className="absolute -bottom-[14px] right-0 flex size-[24px] items-center justify-center rounded-[6px] bg-white">
        <SlackLogo className="size-[18px]" />
      </div>
    </div>
  );
}

function TermOne() {
  return (
    <svg viewBox="0 0 76 57" className="h-[57px] w-[76px]">
      <rect x="1" y="1" width="74" height="55" rx="2" fill="#1d1e1a" stroke="#c3c4c3" strokeWidth="2" />
      <path d="M5 6h35" stroke="#8b8b8b" strokeWidth="1.200" strokeDasharray="2 1" />
      <path d="M7 9h18M7 12.500h4M7 15.500h17M7 18.500h16" stroke="#36787e" strokeWidth="1.300" strokeDasharray="4 1" />
      <path d="M25 15.500h12M25 18.500h14" stroke="#6a4a8c" strokeWidth="1.300" strokeDasharray="3 1" />
    </svg>
  );
}

function TermTwo() {
  return (
    <svg viewBox="0 0 76 47" className="h-[47px] w-[76px]">
      <rect x="1" y="1" width="74" height="45" rx="2" fill="#1d1e1a" stroke="#c3c4c3" strokeWidth="2" />
      <path d="M5 5h8M5 8h6M7 14h20M7 17h22M5 20h8M7 26h12M7 29h16M5 34h20M7 37h14M7 40h10" stroke="#4b5149" strokeWidth="1" strokeDasharray="3 1" />
    </svg>
  );
}

function TrashIcon() {
  return (
    <svg viewBox="0 0 56 74" className="h-[74px] w-[56px]">
      <defs>
        <linearGradient id="tr" x1="0" y1="0" x2="1" y2="0"><stop offset="0" stopColor="#cfcfce" /><stop offset="0.400" stopColor="#ebebea" /><stop offset="1" stopColor="#c4c4c2" /></linearGradient>
      </defs>
      <ellipse cx="28" cy="10" rx="27" ry="7" fill="#a3a3a0" />
      <path d="M4 14l5-11 7 3 6-4 7 5 6-5 6 7 9 4-7 6H12Z" fill="#eeeeee" />
      <path d="M10 13l6-8 4 9ZM31 14l5-10 4 11ZM22 11l4-4 2 7Z" fill="#3f3f42" />
      <path d="M19 9l5-2 1 5Z" fill="#4aa6b8" />
      <path d="M37 14l4-4 4 5Z" fill="#a35a2a" />
      <path d="M1 12c8 6 46 6 54 0l-7 57c-2 6-38 6-40 0Z" fill="url(#tr)" />
      <path d="M14 26l8 10-6 14 10 12M38 26l-9 14 10 10-5 12" stroke="#dadad8" strokeWidth="3" fill="none" />
      <path d="M1 11c6 7 48 7 54 0" stroke="#f6f6f6" strokeWidth="1.500" fill="none" />
    </svg>
  );
}

type DockEntry = { icon: React.ReactNode; dot: boolean };

const dockApps: DockEntry[] = [
  { icon: <FinderIcon />, dot: true },
  { icon: <SafariIcon />, dot: true },
  { icon: <AppStoreIcon />, dot: false },
  { icon: <ChromeIcon />, dot: true },
  { icon: <TerminalIcon />, dot: true },
  { icon: <StarBadge className="size-[68px]" ring="#dcdcdc" hole="#6a6964" star="#d9d9d9" />, dot: true },
  { icon: <NotionIcon />, dot: false },
];

const dockApps2: DockEntry[] = [
  { icon: <SublimeIcon />, dot: true },
  { icon: <SlackIcon />, dot: true },
  { icon: <NotesIcon />, dot: true },
  { icon: <WeChatIcon />, dot: true },
];

function DockItem({ icon, dot }: DockEntry) {
  return (
    <div className="flex w-[82px] shrink-0 flex-col items-center">
      <div className="mt-[8px] flex h-[74px] items-center justify-center">{icon}</div>
      <div className={`mt-[2px] size-[8px] rounded-full ${dot ? 'bg-black' : ''}`} />
    </div>
  );
}

function Dock() {
  return (
    <div className="absolute left-[742px] top-[1690px] flex h-[100px] w-[1396px] rounded-[28px] border-2 border-[#8c8b85] bg-[#6e6d66] pl-[3px] shadow-[0_0_80px_6px_rgba(0,0,0,0.300)]">
      {dockApps.map((a, i) => <DockItem key={i} {...a} />)}
      <div className="ml-[19px] mt-[12px] h-[72px] w-[2px] bg-[#41403c]" />
      <div className="w-[15px] shrink-0" />
      {dockApps2.map((a, i) => <DockItem key={i} {...a} />)}
      <div className="ml-[19px] mt-[12px] h-[72px] w-[2px] bg-[#41403c]" />
      <div className="flex h-[92px] pt-[8px]">
        <div className="ml-[34px] w-[68px]"><PagesStack /></div>
        <div className="w-[80px] pt-[16px]"><SlackWindow /></div>
        <div className="w-[82px] pt-[8px]"><TermOne /></div>
        <div className="w-[92px] pt-[13px]"><TermTwo /></div>
        <TrashIcon />
      </div>
    </div>
  );
}

function AstrillWindow() {
  return (
    <div className="absolute left-[2340px] top-[1724px] flex h-[76px] w-[480px] flex-col rounded-t-[12px] bg-[#2f2f2f] shadow-[0_0_10px_rgba(0,0,0,0.400)]">
      <div className="flex h-[64px] shrink-0 items-center pl-[17px]">
        <div className="flex w-[41px] shrink-0 flex-col gap-[6px]">
          <div className="h-[5px] w-[31px] rounded-[2px] bg-[#d2d2d2]" />
          <div className="h-[5px] w-[31px] rounded-[2px] bg-[#d2d2d2]" />
          <div className="h-[5px] w-[31px] rounded-[2px] bg-[#d2d2d2]" />
        </div>
        <div className="mb-[4px] w-[97px] shrink-0 font-['Noto_Sans',sans-serif] text-[39px] leading-none tracking-[-1.800px] text-[#d4d4d4]">Astrill</div>
        <StarBadge className="mb-[22px] size-[24px] shrink-0" ring="#d8d8d8" hole="#3a3a3a" star="#e2e2e2" />
        <div className="ml-[57px] flex h-[42px] w-[184px] shrink-0 items-center rounded-[6px] border-2 border-[#474747] bg-[#2b2b2b] pl-[8px]">
          <svg viewBox="0 0 32 30" className="h-[30px] w-[32px]">
            <ellipse cx="20" cy="20" rx="10" ry="9" fill="#4a4e54" />
            <circle cx="15" cy="13" r="11" fill="#2559a8" />
            <path d="M6 19c6 4 14 2 19-6 2 8-4 12-10 11-4 0-7-2-9-5Z" fill="#0d2048" />
            <ellipse cx="13" cy="8" rx="6.500" ry="5.500" fill="#a9dcf5" />
            <path d="M26 5c4 2 1 8-6 12S3 23 2 18c0-2 1-3 2-4" stroke="#c9d2dc" strokeWidth="1.800" fill="none" />
          </svg>
          <div className="mb-[2px] ml-[3px] w-[117px] font-['Noto_Sans',sans-serif] text-[23px] leading-none tracking-[-0.300px] text-[#dcdcdc]">OpenWeb</div>
          <svg viewBox="0 0 11 12" className="h-[12px] w-[11px]"><path d="M0 0h11L5.500 12Z" fill="#dcdcdc" /></svg>
        </div>
        <svg viewBox="0 0 34 34" className="ml-[11px] size-[34px] shrink-0"><path d="M3 3l28 28M31 3L3 31" stroke="#9a9a9a" strokeWidth="5.600" strokeLinecap="round" /></svg>
      </div>
      <div className="mx-[12px] grow bg-[#e2e6ec]" />
    </div>
  );
}

export default function App() {
  return (
    <div className="relative flex h-[1800px] w-[2880px] flex-col overflow-hidden bg-[#16243f] font-[Inter,sans-serif]">
      <MenuBar />
      <div className="flex h-[1634px] shrink-0 flex-col bg-[linear-gradient(90deg,#b9a0a8_0px,#a9b3c2_2880px)]">
        <div className="flex h-[1634px] flex-col overflow-hidden rounded-[20px]">
          <TabStrip />
          <Toolbar />
          <BookmarksBar />
          <Page />
        </div>
      </div>
      <DesktopBehind />
      <Dock />
      <AstrillWindow />
    </div>
  );
}
